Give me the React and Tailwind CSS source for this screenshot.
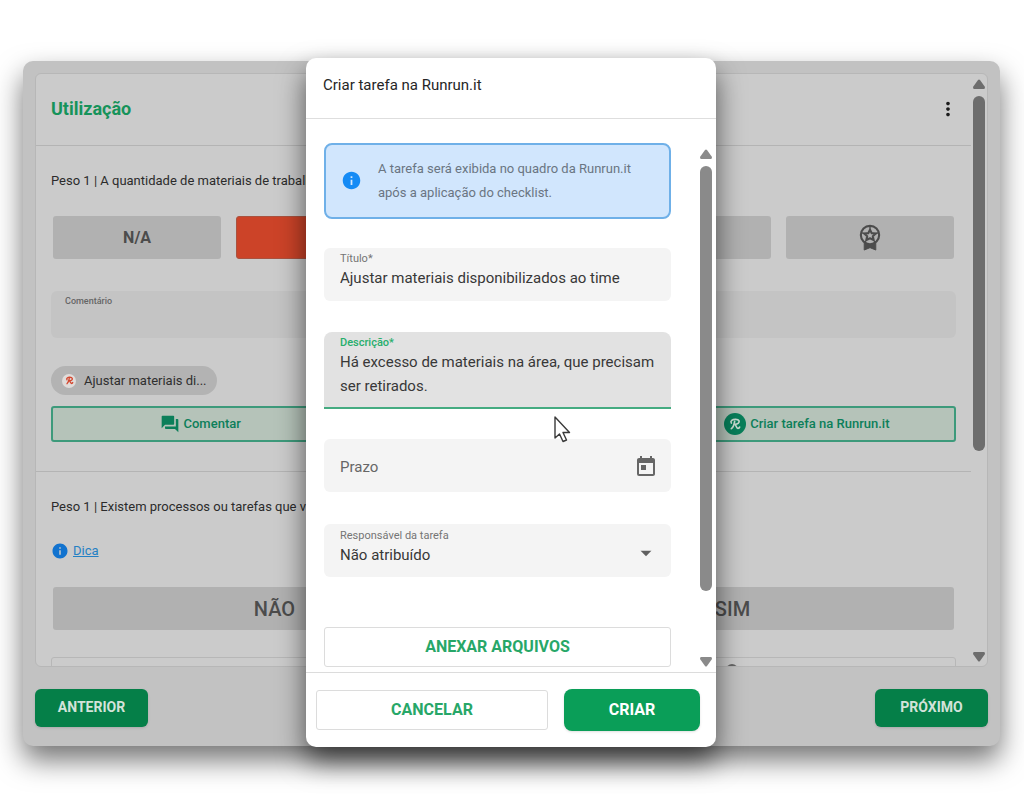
import React, { useState } from "react";
import { MdArrowDropDown, MdForum, MdInfo, MdMoreVert, MdToday } from "react-icons/md";

const RunrunLogo = ({ className }) => (
  <svg viewBox="0 0 24 24" fill="none" stroke="currentColor" strokeWidth="2.500" strokeLinecap="round" strokeLinejoin="round" className={className}>
    <path d="M6.500 10.500C4.500 7.500 8 4.800 13 5C18.500 5.200 19.300 8.500 17 10.800C15.500 12.200 13.300 12.500 11.500 12.500C14 13 13.500 18.300 16.500 18.500C17.800 18.500 18.700 17.500 19 16.500" />
    <path d="M11.500 8C10.800 12 9.500 17 6.500 19" />
  </svg>
);

const Medal = ({ className }) => (
  <svg viewBox="0 0 24 28" fill="none" stroke="currentColor" strokeWidth="2.200" strokeLinejoin="round" className={className}>
    <circle cx="12" cy="11.500" r="9.500" />
    <path d="M12 6L13.800 9.500L18 9.900L14.900 12.700L15.800 16.500L12 14.800L8.200 16.500L9.100 12.700L6 9.900L10.200 9.500Z" />
    <path d="M12 2V5.500M3 9L6 9.900M21 9L18 9.900M15.800 17L17.500 19M8.200 17L6.500 19" strokeWidth="1.500" />
    <path d="M6 19V27L12 24.500L18 27V19L12 21.500Z" fill="currentColor" strokeWidth="1" />
  </svg>
);

const Scrollbar = ({ arrow, thumb, thumbHeight, className }) => (
  <div aria-hidden="true" className={`flex flex-col items-center ${className}`}>
    <svg viewBox="0 0 12 10" className={`h-[10px] w-3 ${arrow}`} fill="currentColor">
      <path d="M5 1Q6 0 7 1L12 8Q12 10 11 10H1Q0 10 0 8Z" />
    </svg>
    <div className="my-[7px] w-full flex-1">
      <div className={`mx-auto w-3 rounded-full ${thumb} ${thumbHeight}`} />
    </div>
    <svg viewBox="0 0 12 10" className={`h-[10px] w-3 rotate-180 ${arrow}`} fill="currentColor">
      <path d="M5 1Q6 0 7 1L12 8Q12 10 11 10H1Q0 10 0 8Z" />
    </svg>
  </div>
);

const answerClass = "flex h-[43px] items-center justify-center rounded-[3px] bg-[#b1b1b1] text-[#4c4c4c]";
const actionClass =
  "flex h-9 items-center justify-center gap-1 rounded-[3px] border-2 border-[#3d9a7b] bg-[#b5c3b9] text-[13px] font-medium text-[#0c7f5a]";
const navClass = "h-[38px] w-[113px] rounded-md bg-[#057f48] pb-[2px] text-sm font-bold text-[#d3e3da] shadow";

const Checklist = ({ onOpenTask }) => (
  <main className="flex flex-col rounded-[10px] bg-[#c2c2c2] px-3 pt-3 pb-[19px] shadow-[0_14px_28px_rgba(0,0,0,0.55)]">
    <div className="flex h-[594px] overflow-hidden rounded-md border border-[#b7b7b7] bg-[#cbcbcb]">
      <div className="min-w-0 flex-1">
        <header className="flex h-[72px] items-center justify-between border-b border-[#b4b4b4] pr-3 pb-[2px] pl-[15px]">
          <h1 className="text-lg font-bold text-[#16935a]">Utilização</h1>
          <button type="button" aria-label="Mais opções">
            <MdMoreVert className="h-[22px] w-[22px] text-[#1c1c1c]" />
          </button>
        </header>

        <section className="h-[326px] border-b border-[#b4b4b4] pt-[25px] pr-[15px] pl-[15px]">
          <p className="truncate text-[13px] leading-5 text-[#2b2b2b]">
            Peso 1 | A quantidade de materiais de trabalho disponível é adequada?
          </p>
          <div className="mx-[2px] mt-[25px] grid grid-cols-5 gap-[15px]">
            <button type="button" className={`font-bold ${answerClass}`}>N/A</button>
            <button type="button" aria-label="Ruim" className="h-[43px] rounded-[3px] border border-[#a9523f] bg-[#cc4328]" />
            <button type="button" aria-label="Regular" className={answerClass} />
            <button type="button" aria-label="Bom" className={answerClass} />
            <button type="button" aria-label="Excelente" className={answerClass}>
              <Medal className="h-[27px] w-6" />
            </button>
          </div>
          <div className="mt-8 flex h-[47px] flex-col rounded-md bg-[#c4c4c4] px-[14px] pt-1">
            <label htmlFor="comment" className="text-[9px] leading-3 font-medium text-[#666]">Comentário</label>
            <input id="comment" className="w-full flex-1 bg-transparent text-sm outline-none" />
          </div>
          <div className="mt-7 flex">
            <span className="flex h-[29px] items-center gap-2 rounded-full bg-[#b3b3b3] pr-[10px] pl-[11px] text-[13px] text-[#2f2f2f]">
              <span className="flex h-[14px] w-[14px] items-center justify-center rounded-full bg-[#e0dcda]">
                <RunrunLogo className="h-[11px] w-[11px] stroke-3 text-[#d4472f]" />
              </span>
              Ajustar materiais di...
            </span>
          </div>
          <div className="mt-[11px] grid grid-cols-3 gap-[5px]">
            <button type="button" className={actionClass}>
              <MdForum className="h-5 w-5" />
              Comentar
            </button>
            <button type="button" aria-label="Plano de ação" className={actionClass} />
            <button type="button" onClick={onOpenTask} className={actionClass}>
              <span className="flex h-[22px] w-[22px] items-center justify-center rounded-full bg-[#087f5a] text-[#c9dcd1]">
                <RunrunLogo className="h-4 w-4" />
              </span>
              Criar tarefa na Runrun.it
            </button>
          </div>
        </section>

        <section className="pt-[25px] pr-[15px] pl-[15px]">
          <p className="truncate text-[13px] leading-5 text-[#2b2b2b]">
            Peso 1 | Existem processos ou tarefas que você considera desnecessários?
          </p>
          <a href="#dica" className="mt-6 flex items-center gap-1 text-[13px] leading-5 text-[#2480c4]">
            <MdInfo className="h-[18px] w-[18px] text-[#1273cf]" />
            <span className="underline">Dica</span>
          </a>
          <div className="mx-[2px] mt-[26px] grid grid-cols-2 gap-[15px] text-xl">
            <button type="button" className={`font-medium ${answerClass}`}>NÃO</button>
            <button type="button" className={`font-medium ${answerClass}`}>SIM</button>
          </div>
          <div className="mt-[27px] grid h-10 grid-cols-3 rounded-[3px] border border-[#b7b7b7]">
            <span className="col-start-3 mt-[6px] ml-[72px] h-3 w-3 rounded-full bg-[#666]" />
          </div>
        </section>
      </div>
      <Scrollbar className="mt-[5px] mb-1 w-4" arrow="text-[#6d6d6d]" thumb="bg-[#6d6d6d]" thumbHeight="h-[355px]" />
    </div>

    <div className="mt-[22px] flex justify-between">
      <button type="button" className={navClass}>ANTERIOR</button>
      <button type="button" className={navClass}>PRÓXIMO</button>
    </div>
  </main>
);

const labelClass = "text-[11px] leading-[14px] text-[#757575]";
const valueClass = "w-full bg-transparent text-[15px] leading-6 text-[#383838] outline-none";

const TaskDialog = ({ onClose }) => {
  const [task, setTask] = useState({
    title: "Ajustar materiais disponibilizados ao time",
    description: "Há excesso de materiais na área, que precisam ser retirados.",
    due: "",
    owner: "",
  });

  const handleChange = (e) => setTask({ ...task, [e.target.name]: e.target.value });

  const handleSubmit = (e) => {
    e.preventDefault();
    onClose();
  };

  return (
    <div className="absolute inset-0 flex items-start justify-center pt-[58px] pr-[2px]">
      <form
        role="dialog"
        aria-labelledby="task-heading"
        onSubmit={handleSubmit}
        className="w-full max-w-[410px] rounded-[10px] bg-white shadow-[0_14px_28px_rgba(0,0,0,0.6)]"
      >
        <header className="h-[61px] border-b border-[#dedede] px-[17px] pt-[17px]">
          <h2 id="task-heading" className="text-[15px] leading-5 text-[#262626]">Criar tarefa na Runrun.it</h2>
        </header>

        <div className="flex h-[553px] pl-[18px]">
          <div className="flex-1 pt-6">
            <div className="flex h-[76px] items-center gap-4 rounded-lg border-2 border-[#6fb0e8] bg-[#d1e6fd] pb-[2px] pl-[15px]">
              <MdInfo className="h-[21px] w-[21px] shrink-0 text-[#158bf5]" />
              <p className="pt-[2px] text-[13px] leading-6 text-[#6a7582]">
                A tarefa será exibida no quadro da Runrun.it
                <br />
                após a aplicação do checklist.
              </p>
            </div>

            <div className="mt-[29px] h-[53px] rounded-md bg-[#f4f4f4] px-4 pt-1">
              <label htmlFor="title" className={`block ${labelClass}`}>Título*</label>
              <input id="title" name="title" value={task.title} onChange={handleChange} className={`block ${valueClass}`} />
            </div>

            <div className="mt-[31px] h-[77px] rounded-t-lg border-b-2 border-[#45ab81] bg-[#e2e2e2] pt-1 pl-4">
              <label htmlFor="description" className="block text-[11px] leading-[14px] font-medium text-[#27ae6c]">Descrição*</label>
              <textarea
                id="description"
                name="description"
                rows={2}
                value={task.description}
                onChange={handleChange}
                className={`block resize-none overflow-hidden ${valueClass}`}
              />
            </div>

            <div className="mt-[30px] flex h-[53px] items-center rounded-md bg-[#f4f4f4] pt-[2px] pr-[13px] pl-4">
              <input
                name="due"
                aria-label="Prazo"
                placeholder="Prazo"
                value={task.due}
                onChange={handleChange}
                className={`min-w-0 placeholder:text-[#666] ${valueClass}`}
              />
              <button type="button" aria-label="Abrir calendário">
                <MdToday className="h-6 w-6 text-[#666]" />
              </button>
            </div>

            <div className="relative mt-8 h-[53px] rounded-md bg-[#f4f4f4] px-4 pt-[5px]">
              <label htmlFor="owner" className={`block ${labelClass}`}>Responsável da tarefa</label>
              <select id="owner" name="owner" value={task.owner} onChange={handleChange} className={`block appearance-none ${valueClass}`}>
                <option value="">Não atribuído</option>
              </select>
              <MdArrowDropDown className="pointer-events-none absolute top-4 right-3 h-[26px] w-[26px] text-[#606060]" />
            </div>

            <button type="button" className="mt-[50px] h-10 w-full rounded-[3px] border border-[#dcdcdc] font-bold text-[#27a768]">
              ANEXAR ARQUIVOS
            </button>
          </div>
          <Scrollbar className="mt-[30px] mb-[5px] ml-[25px] w-5" arrow="text-[#8a8a8a]" thumb="bg-[#8a8a8a]" thumbHeight="h-[425px]" />
        </div>

        <footer className="flex items-center gap-4 border-t border-[#dcdcdc] py-[16px] pr-4 pl-[10px]">
          <button type="button" onClick={onClose} className="h-10 flex-1 rounded-[3px] border border-[#dcdcdc] font-bold text-[#27a768]">
            CANCELAR
          </button>
          <button type="submit" className="h-[42px] w-[136px] rounded-lg bg-[#0a9e58] font-bold text-white shadow">
            CRIAR
          </button>
        </footer>
      </form>

      <svg viewBox="0 0 18 28" aria-hidden="true" className="pointer-events-none absolute top-[415px] left-[553px] h-7 w-[18px]">
        <path d="M2 2V23L6.500 19L10 26.500L13.500 25L10 17.500H16.500Z" fill="white" stroke="#3a3a3a" strokeWidth="1.400" strokeLinejoin="round" />
      </svg>
    </div>
  );
};

const App = () => {
  const [open, setOpen] = useState(true);

  return (
    <div className="relative min-h-screen bg-white pt-[61px] pr-6 pb-14 pl-[23px] font-['Roboto',sans-serif]">
      <Checklist onOpenTask={() => setOpen(true)} />
      {open && <TaskDialog onClose={() => setOpen(false)} />}
    </div>
  );
};

export default App;
